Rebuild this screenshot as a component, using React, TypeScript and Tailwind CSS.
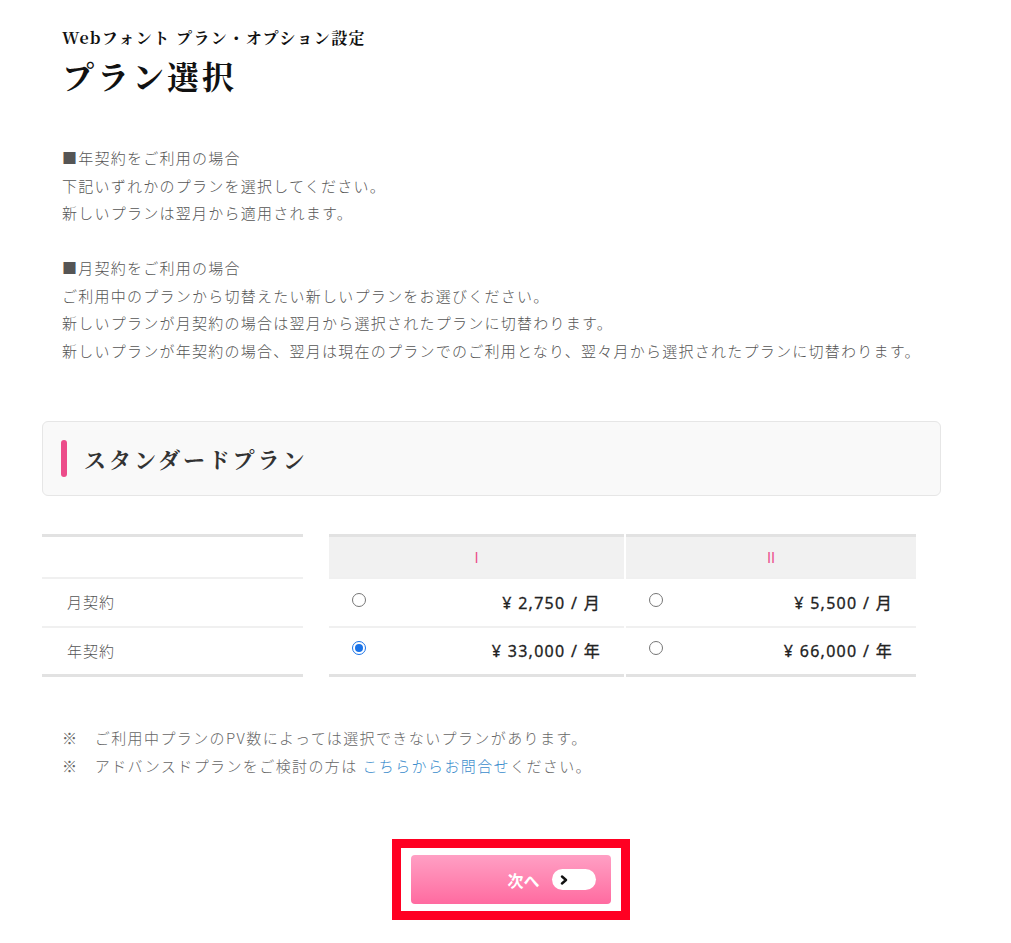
import React from "react";

const sans = "font-['Noto_Sans_CJK_JP','Noto_Sans',sans-serif]";
const serif = "font-['Noto_Serif_CJK_JP','Liberation_Serif','Noto_Sans_CJK_JP',serif]";

function Radio({ checked }: { checked?: boolean }) {
  return checked ? (
    <span className="inline-flex h-[14px] w-[14px] items-center justify-center rounded-full border-[1.5px] border-[#1a73e8] bg-white">
      <span className="h-[8px] w-[8px] rounded-full bg-[#1a73e8]" />
    </span>
  ) : (
    <span className="inline-block h-[14px] w-[14px] rounded-full border border-[#767676] bg-white" />
  );
}

function PriceCell({ price, checked, w, ml, last }: { price: string; checked?: boolean; w: string; ml: string; last?: boolean }) {
  return (
    <div
      className={`${w} ${ml} flex items-center justify-between pl-[23px] pr-[23px] border-t-2 border-[#f0f0f0] ${last ? "border-b-[3px] border-b-[#e2e2e2]" : ""}`}
    >
      <span className="-mt-[6px] flex">
        <Radio checked={checked} />
      </span>
      <span className="text-[16px] font-normal text-[#222] tracking-[1.3px] font-['Noto_Sans','Noto_Sans_CJK_JP',sans-serif] whitespace-pre [-webkit-text-stroke:0.3px_#222]">
        {price}
      </span>
    </div>
  );
}

export default function App() {
  return (
    <div className={`min-h-[943px] w-[1011px] bg-white ${sans}`}>
      <div className="w-[899px] ml-[42px] pt-[27px]">
        <div className="pl-[20px]">
          <div className={`text-[16px] leading-[22px] font-bold text-[#111] tracking-[1.4px] ${serif}`}>
            Webフォント プラン・オプション設定
          </div>
          <h1 className={`mt-[6px] text-[32px] leading-[40px] font-bold text-[#111] tracking-[3px] ${serif}`}>
            プラン選択
          </h1>
          <div className="mt-[49px] text-[15px] leading-[27.5px] tracking-[1.25px] text-[#555] font-light">
            <p>■年契約をご利用の場合</p>
            <p>下記いずれかのプランを選択してください。</p>
            <p>新しいプランは翌月から適用されます。</p>
            <p>&nbsp;</p>
            <p>■月契約をご利用の場合</p>
            <p>ご利用中のプランから切替えたい新しいプランをお選びください。</p>
            <p>新しいプランが月契約の場合は翌月から選択されたプランに切替わります。</p>
            <p>新しいプランが年契約の場合、翌月は現在のプランでのご利用となり、翌々月から選択されたプランに切替わります。</p>
          </div>
        </div>

        <div className="mt-[57px] h-[75px] rounded-[6px] border border-[#e6e6e6] bg-[#f9f9f9] flex items-center pl-[18px]">
          <span className="h-[37px] w-[6px] rounded-full bg-[#ec4c8a]" />
          <span className={`ml-[17px] text-[22px] font-bold text-[#333] tracking-[3px] ${serif}`}>
            スタンダードプラン
          </span>
        </div>

        <div className="mt-[38px]">
          <div className="flex h-[43px]">
            <div className="w-[261px] border-t-[3px] border-[#e2e2e2]" />
            <div className="ml-[26px] w-[295px] border-t-[3px] border-[#e2e2e2] bg-[#f1f1f1] flex items-center justify-center text-[14px] text-[#ec4c8a]">
              I
            </div>
            <div className="ml-[2px] w-[290px] border-t-[3px] border-[#e2e2e2] bg-[#f1f1f1] flex items-center justify-center text-[14px] text-[#ec4c8a]">
              II
            </div>
          </div>
          <div className="flex h-[49px]">
            <div className="w-[261px] border-t-2 border-[#f0f0f0] flex items-center pl-[25px] text-[15px] tracking-[1px] text-[#555] font-light">
              月契約
            </div>
            <PriceCell w="w-[295px]" ml="ml-[26px]" price="¥ 2,750 / 月" />
            <PriceCell w="w-[290px]" ml="ml-[2px]" price="¥ 5,500 / 月" />
          </div>
          <div className="flex h-[51px]">
            <div className="w-[261px] border-t-2 border-b-[3px] border-[#f0f0f0] border-b-[#e2e2e2] flex items-center pl-[25px] text-[15px] tracking-[1px] text-[#555] font-light">
              年契約
            </div>
            <PriceCell w="w-[295px]" ml="ml-[26px]" price="¥ 33,000 / 年" checked last />
            <PriceCell w="w-[290px]" ml="ml-[2px]" price="¥ 66,000 / 年" last />
          </div>
        </div>

        <div className="mt-[47px] pl-[20px] text-[15px] leading-[28px] tracking-[1.4px] text-[#666] font-light">
          <p>※　ご利用中プランのPV数によっては選択できないプランがあります。</p>
          <p>
            ※　アドバンスドプランをご検討の方は <span className="text-[#3a8ccc]">こちらからお問合せ</span>ください。
          </p>
        </div>

        <div className="mt-[59px] flex justify-center pl-[38px]">
          <div className="border-[9px] border-[#ff0022] bg-white px-[10px] py-[7px]">
            <button className="relative flex h-[49px] w-[200px] items-center justify-end rounded-[4px] bg-gradient-to-b from-[#ff9fc4] to-[#ff6aa0] pr-[15px]">
              <span className="mr-[12px] text-[16px] font-bold text-white">次へ</span>
              <span className="flex h-[21px] w-[44px] items-center rounded-full bg-white pl-[8px]">
                <svg width="9" height="10" viewBox="0 0 9 10">
                  <path d="M2 1.5 L6 5 L2 8.5" fill="none" stroke="#111" strokeWidth="2.4" strokeLinecap="round" strokeLinejoin="round" />
                </svg>
              </span>
            </button>
          </div>
        </div>
      </div>
    </div>
  );
}
